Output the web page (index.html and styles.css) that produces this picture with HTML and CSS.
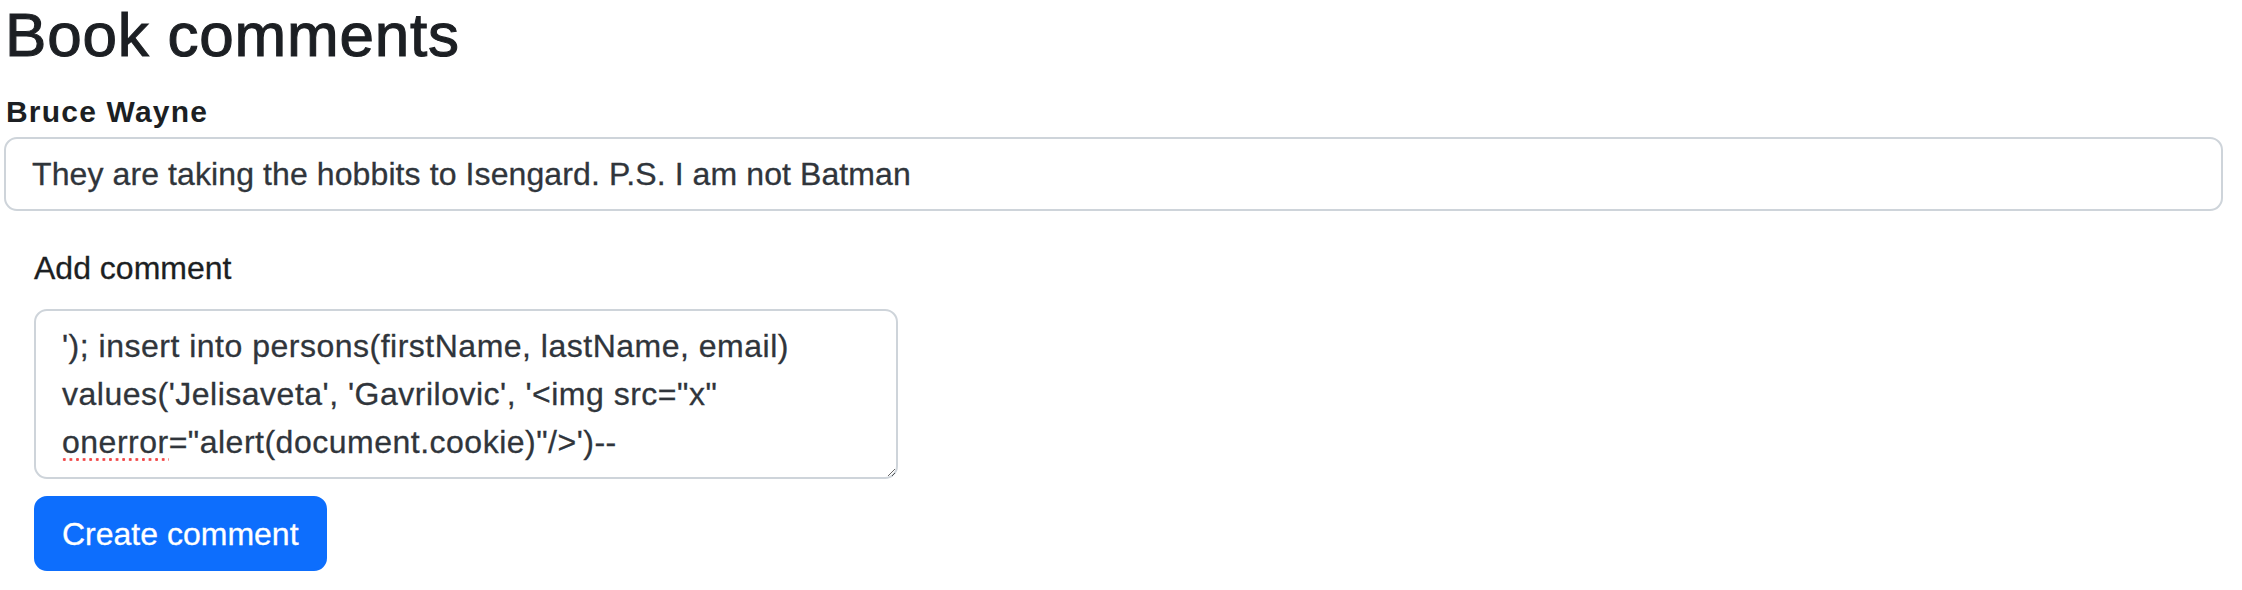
FILE: index.html
```html
<!DOCTYPE html>
<html lang="en">
<head>
<meta charset="utf-8">
<title>Book comments</title>
<link rel="stylesheet" href="styles.css">
</head>
<body>
<main class="page">
  <h1 class="title">Book comments</h1>
  <section class="comment">
    <label class="author" for="c1">Bruce Wayne</label>
    <input id="c1" class="field field-input" type="text" readonly value="They are taking the hobbits to Isengard. P.S. I am not Batman">
  </section>
  <form class="add-form" onsubmit="return false">
    <label class="add-label" for="newComment">Add comment</label>
    <div class="area-wrap">
      <textarea id="newComment" class="field field-area" spellcheck="false">'); insert into persons(firstName, lastName, email)
values('Jelisaveta', 'Gavrilovic', '&lt;img src="x"
onerror="alert(document.cookie)"/&gt;')--</textarea>
      <span class="spell-mark" aria-hidden="true"></span>
    </div>
    <button class="btn-primary" type="submit">Create comment</button>
  </form>
</main>
</body>
</html>
```
FILE: styles.css
```css
html, body {
  margin: 0;
  padding: 0;
  background: #ffffff;
}

body {
  font-family: "Liberation Sans", Arial, sans-serif;
  color: #212529;
}

.page {
  padding: 0 19px 0 4px;
  display: flex;
  flex-direction: column;
}

.title {
  margin: 0 0 24px 0;
  font-size: 62px;
  line-height: 70px;
  font-weight: 400;
  letter-spacing: 0.8px;
  -webkit-text-stroke: 1.1px #1c1f23;
  color: #1c1f23;
  padding-left: 1px;
}

.comment {
  display: flex;
  flex-direction: column;
}

.author {
  display: block;
  font-size: 30px;
  line-height: 36px;
  font-weight: 700;
  letter-spacing: 1.2px;
  margin: 0 0 7px 2px;
  color: #1c1f23;
}

.field {
  box-sizing: border-box;
  font-family: "Liberation Sans", Arial, sans-serif;
  font-size: 32px;
  line-height: 48px;
  color: #30353b;
  -webkit-text-stroke: 0.3px #30353b;
  background: #ffffff;
  border: 2px solid #ced4da;
  border-radius: 13px;
  padding: 11px 26px;
  outline: none;
  margin: 0;
}

.field-input {
  width: 100%;
  height: 74px;
  letter-spacing: 0.1px;
}

.add-form {
  display: flex;
  flex-direction: column;
  align-items: flex-start;
  margin: 33px 0 0 30px;
}

.add-label {
  display: block;
  font-size: 32px;
  line-height: 48px;
  margin: 0 0 17px 0;
  color: #1c1f23;
  -webkit-text-stroke: 0.3px #1c1f23;
}

.area-wrap {
  position: relative;
  display: flex;
}

.field-area {
  width: 864px;
  height: 170px;
  resize: vertical;
  overflow: hidden;
  white-space: pre-wrap;
  letter-spacing: 0.5px;
  display: block;
}

.spell-mark {
  position: absolute;
  left: 27px;
  top: 149px;
  width: 108px;
  height: 3px;
  background-image: radial-gradient(circle, #f24a4a 1.3px, transparent 1.6px);
  background-size: 6.6px 3px;
  background-repeat: repeat-x;
  pointer-events: none;
}

.btn-primary {
  box-sizing: border-box;
  margin-top: 17px;
  height: 75px;
  padding: 0 26px;
  display: inline-flex;
  align-items: center;
  font-family: "Liberation Sans", Arial, sans-serif;
  font-size: 32px;
  line-height: 48px;
  color: #ffffff;
  -webkit-text-stroke: 0.3px #ffffff;
  background: #0d6efd;
  border: 2px solid #0d6efd;
  border-radius: 13px;
  cursor: pointer;
}
```
